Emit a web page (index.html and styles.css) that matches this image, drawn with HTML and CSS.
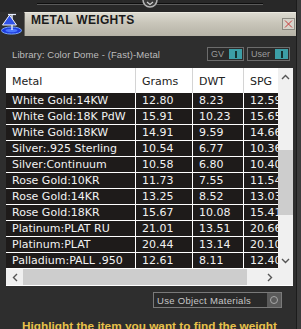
FILE: index.html
```html
<!DOCTYPE html>
<html>
<head>
<meta charset="utf-8">
<title>Metal Weights</title>
<link rel="stylesheet" href="styles.css">
</head>
<body>
<div class="window">
  <div class="panel">
    <div class="topbar">
      <div class="slider-line"></div>
      <svg class="knob" width="16" height="9" viewBox="0 0 16 9">
        <circle cx="8" cy="0" r="7" fill="#3a3a3a" stroke="#b4b4b4" stroke-width="1.5"/>
        <path d="M5 2 L8 4.5 L11 2" fill="none" stroke="#d0d0d0" stroke-width="1.2"/>
      </svg>
    </div>
    <div class="titlebar">
      <svg class="logo" width="24" height="24" viewBox="0 0 24 24">
        <ellipse cx="11.5" cy="18.5" rx="10" ry="3.6" fill="#1f3de0" stroke="#78a8ff" stroke-width="1"/>
        <ellipse cx="11.5" cy="18.5" rx="6" ry="1.8" fill="#4a78ff"/>
        <line x1="12" y1="2" x2="12" y2="18" stroke="#e8eeff" stroke-width="1.4"/>
        <line x1="8" y1="2.5" x2="16" y2="2.5" stroke="#e8eeff" stroke-width="1.2"/>
        <path d="M9.5 3 L2.5 13 L16.5 13 Z" fill="#2f52e8" stroke="#f0f4ff" stroke-width="1"/>
      </svg>
      <div class="titlebox">
        <span class="title">METAL WEIGHTS</span>
        <span class="close">
          <svg width="11" height="10" viewBox="0 0 11 10">
            <path d="M2 1.5 L9 8.5 M9 1.5 L2 8.5" stroke="#c83a3a" stroke-width="1"/>
          </svg>
        </span>
      </div>
    </div>
    <div class="libraryrow">
      <span class="library">Library: Color Dome - (Fast)-Metal</span>
      <div class="toggles">
        <span class="toggle gv"><span class="tlabel">GV</span><span class="tswitch"><i></i></span></span>
        <span class="toggle user"><span class="tlabel">User</span><span class="tswitch"><i></i></span></span>
      </div>
    </div>
    <div class="tablebox">
      <div class="tablemain">
        <div class="cols">
          <div class="thead">
            <span class="th c-metal">Metal</span>
            <span class="th c-grams">Grams</span>
            <span class="th c-dwt">DWT</span>
            <span class="th c-spg">SPG</span>
          </div>
          <div class="tbody">
            <span>White Gold:14KW</span><span>12.80</span><span>8.23</span><span>12.59</span>
            <span>White Gold:18K PdW</span><span>15.91</span><span>10.23</span><span>15.65</span>
            <span>White Gold:18KW</span><span>14.91</span><span>9.59</span><span>14.66</span>
            <span>Silver:.925 Sterling</span><span>10.54</span><span>6.77</span><span>10.36</span>
            <span>Silver:Continuum</span><span>10.58</span><span>6.80</span><span>10.40</span>
            <span>Rose Gold:10KR</span><span>11.73</span><span>7.55</span><span>11.54</span>
            <span>Rose Gold:14KR</span><span>13.25</span><span>8.52</span><span>13.03</span>
            <span>Rose Gold:18KR</span><span>15.67</span><span>10.08</span><span>15.41</span>
            <span>Platinum:PLAT RU</span><span>21.01</span><span>13.51</span><span>20.66</span>
            <span>Platinum:PLAT</span><span>20.44</span><span>13.14</span><span>20.10</span>
            <span>Palladium:PALL .950</span><span>12.61</span><span>8.11</span><span>12.40</span>
          </div>
        </div>
        <div class="vscroll">
          <div class="sbtn">
            <svg width="9" height="6" viewBox="0 0 9 6"><path d="M1 5 L4.5 1.5 L8 5" fill="none" stroke="#555" stroke-width="1.4"/></svg>
          </div>
          <div class="vtrack"><div class="vthumb"></div></div>
          <div class="sbtn">
            <svg width="9" height="6" viewBox="0 0 9 6"><path d="M1 1 L4.5 4.5 L8 1" fill="none" stroke="#555" stroke-width="1.4"/></svg>
          </div>
        </div>
      </div>
      <div class="hscroll">
        <div class="hbtn">
          <svg width="6" height="9" viewBox="0 0 6 9"><path d="M5 1 L1.5 4.5 L5 8" fill="none" stroke="#555" stroke-width="1.4"/></svg>
        </div>
        <div class="hthumb"></div>
        <div class="htrack"></div>
        <div class="hbtn">
          <svg width="6" height="9" viewBox="0 0 6 9"><path d="M1 1 L4.5 4.5 L1 8" fill="none" stroke="#555" stroke-width="1.4"/></svg>
        </div>
        <div class="corner"></div>
      </div>
    </div>
    <div class="optrow">
      <div class="check">
        <span class="checklabel">Use Object Materials</span>
        <span class="radio"><i></i></span>
      </div>
    </div>
    <p class="hint">Highlight the item you want to find the weight</p>
  </div>
  <div class="edge"></div>
</div>
</body>
</html>
```
FILE: styles.css
```css
html, body {
  margin: 0;
  padding: 0;
}
body {
  width: 301px;
  height: 329px;
  overflow: hidden;
  background: #3a3a3a;
  font-family: "Liberation Sans", Arial, sans-serif;
}
.window {
  display: flex;
  height: 329px;
}
.panel {
  width: 296px;
  height: 329px;
  background: #2e2e2e;
  overflow: hidden;
  flex: none;
}
.edge {
  flex: 1;
  background: #3b3b3b;
  border-left: 1px solid #1c1c1c;
}
.topbar {
  position: relative;
  height: 12px;
  background: #282828;
}
.slider-line {
  margin-left: 37px;
  position: relative;
  top: 3px;
  width: 226px;
  height: 1px;
  background: #0e0e0e;
  border-bottom: 1px solid #5a5a5a;
}
.knob {
  position: absolute;
  left: 142px;
  top: 0;
}
.titlebar {
  display: flex;
  height: 24px;
}
.logo {
  flex: none;
  width: 24px;
  height: 24px;
}
.titlebox {
  flex: 1;
  display: flex;
  justify-content: space-between;
  align-items: flex-start;
  box-sizing: border-box;
  background: linear-gradient(#dcdad0, #c8c5b9 45%, #b6b3a7);
  border-top: 1px solid #ebe9e0;
  border-left: 1px solid #6a6862;
  padding-left: 6px;
}
.title {
  font-weight: bold;
  font-size: 12px;
  line-height: 14px;
  letter-spacing: 0.3px;
  color: #1b1b1b;
}
.close {
  display: flex;
  align-items: center;
  justify-content: center;
  width: 11px;
  height: 10px;
  margin-top: 5px;
  margin-right: 1px;
  background: #d6d4cb;
  border: 1px solid #8c8a82;
}
.libraryrow {
  display: flex;
  justify-content: space-between;
  align-items: center;
  height: 14px;
  margin-top: 11px;
  padding: 0 6px 0 12px;
}
.library {
  font-size: 9.5px;
  letter-spacing: 0.1px;
  color: #bdbdbd;
  white-space: nowrap;
}
.toggles {
  display: flex;
  gap: 3px;
}
.toggle {
  display: flex;
  align-items: center;
  justify-content: space-between;
  box-sizing: border-box;
  height: 14px;
  border: 1px solid #6c6c6c;
  background: #2a2a2a;
  padding: 0 1px 0 3px;
}
.toggle.gv { width: 37px; }
.toggle.user { width: 43px; }
.tlabel {
  font-size: 9px;
  color: #9c9c9c;
}
.tswitch {
  display: flex;
  align-items: center;
  justify-content: center;
  width: 13px;
  height: 10px;
  background: #3c9ea6;
}
.tswitch i {
  display: block;
  width: 2px;
  height: 7px;
  background: #15302f;
}
.tablebox {
  margin: 7px 3px 0 6px;
  width: 287px;
  background: #ffffff;
  padding-bottom: 1px;
}
.tablemain {
  display: flex;
}
.cols {
  width: 272px;
  overflow: hidden;
  flex: none;
}
.thead {
  display: flex;
  height: 25px;
  background: #ffffff;
  font-family: "DejaVu Sans", Verdana, sans-serif;
  font-size: 11px;
  color: #222222;
  white-space: nowrap;
}
.th {
  flex: none;
  box-sizing: border-box;
  padding: 2px 0 0 6px;
  line-height: 23px;
  border-right: 1px solid #d4d4d4;
}
.c-metal { width: 130px; }
.c-grams { width: 57px; }
.c-dwt { width: 51px; }
.c-spg { width: 50px; border-right: none; }
.tbody {
  display: grid;
  grid-template-columns: 129px 56px 50px 50px;
  grid-auto-rows: 15px;
  gap: 1px;
  padding-bottom: 1px;
  background: #ffffff;
  font-family: "DejaVu Sans", Verdana, sans-serif;
  font-size: 11px;
  color: #f2f2f2;
}
.tbody span {
  background: #1e1b1a;
  padding: 1px 0 0 6px;
  line-height: 14px;
  white-space: nowrap;
  overflow: hidden;
}
.vscroll {
  flex: 1;
  display: flex;
  flex-direction: column;
  background: #f0f0f0;
}
.sbtn {
  height: 17px;
  display: flex;
  align-items: center;
  justify-content: center;
  flex: none;
}
.vtrack {
  flex: 1;
}
.vthumb {
  margin-top: 65px;
  height: 65px;
  background: #cdcdcd;
}
.hscroll {
  display: flex;
  height: 16px;
  background: #f0f0f0;
}
.hbtn {
  width: 17px;
  display: flex;
  align-items: center;
  justify-content: center;
  flex: none;
}
.hthumb {
  width: 224px;
  background: #cdcdcd;
  flex: none;
}
.htrack {
  flex: 1;
}
.corner {
  width: 15px;
  flex: none;
}
.optrow {
  display: flex;
  justify-content: flex-end;
  margin-top: 6px;
  padding-right: 14px;
}
.check {
  display: flex;
  align-items: center;
  justify-content: space-between;
  box-sizing: border-box;
  width: 129px;
  height: 16px;
  border: 1px solid #7a7a7a;
  background: #2a2a2a;
  padding: 0 0 0 3px;
}
.checklabel {
  font-size: 9.5px;
  letter-spacing: 0.3px;
  color: #c6c6c6;
  white-space: nowrap;
}
.radio {
  display: flex;
  align-items: center;
  justify-content: center;
  width: 14px;
  height: 14px;
  background: #5a5a5a;
}
.radio i {
  display: block;
  width: 6px;
  height: 6px;
  border-radius: 50%;
  border: 1px solid #a8a8a8;
}
.hint {
  margin: 11px 0 0;
  padding-left: 3px;
  text-align: center;
  font-weight: bold;
  font-size: 11.8px;
  line-height: 14px;
  color: #e8c24a;
  white-space: nowrap;
}
```
